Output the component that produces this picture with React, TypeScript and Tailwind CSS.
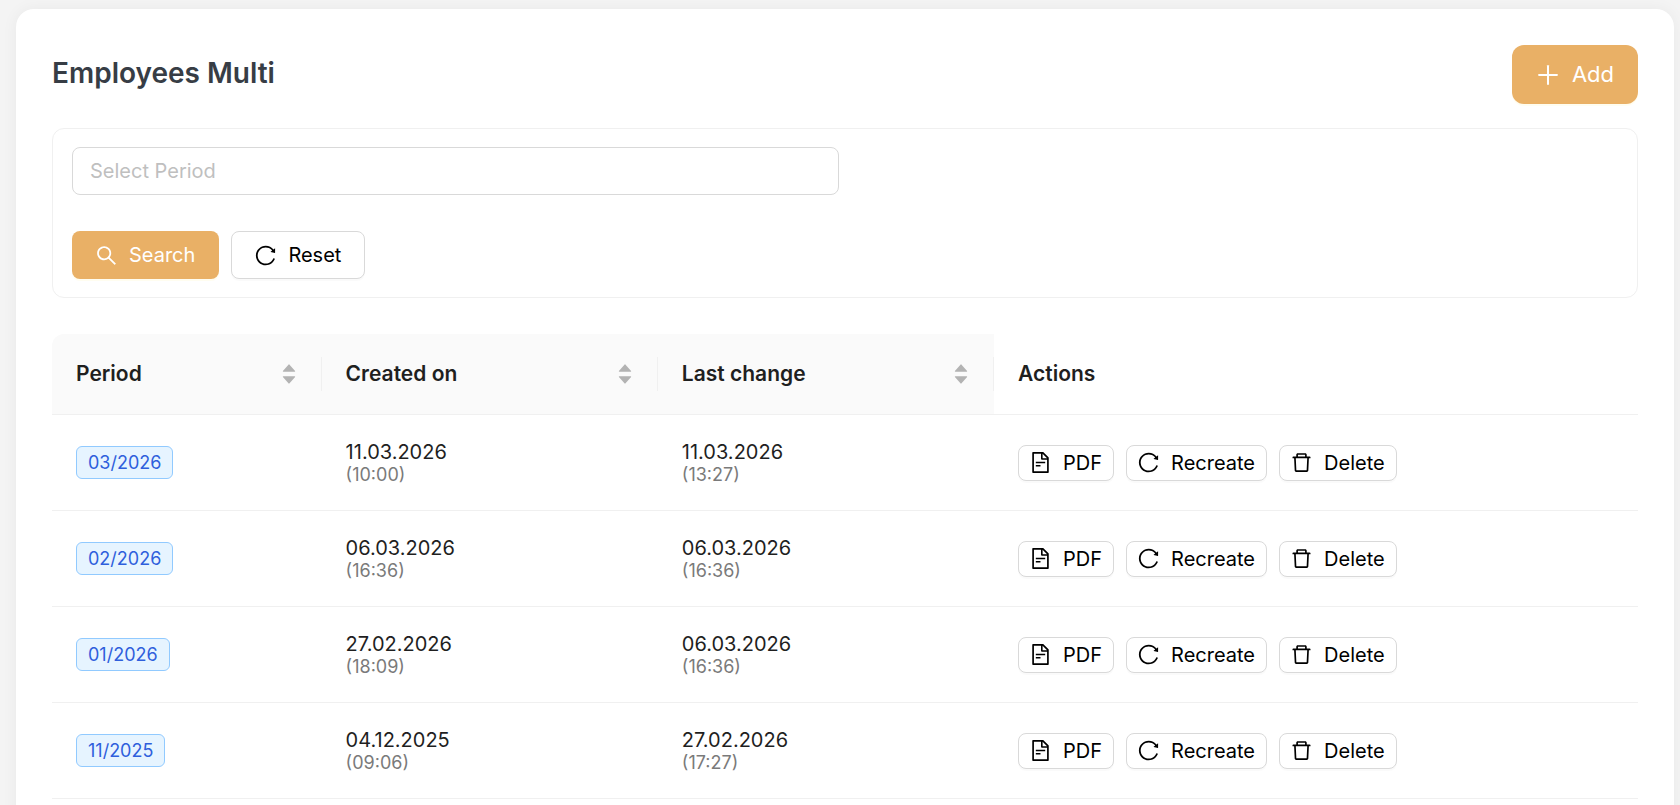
import type { ReactNode } from "react";
import {
  AiFillCaretDown,
  AiFillCaretUp,
  AiOutlineDelete,
  AiOutlineFileText,
  AiOutlinePlus,
  AiOutlineReload,
  AiOutlineSearch,
} from "react-icons/ai";

type Stamp = { date: string; time: string };
type Row = { period: string; created: Stamp; changed: Stamp };

const rows: Row[] = [
  { period: "03/2026", created: { date: "11.03.2026", time: "10:00" }, changed: { date: "11.03.2026", time: "13:27" } },
  { period: "02/2026", created: { date: "06.03.2026", time: "16:36" }, changed: { date: "06.03.2026", time: "16:36" } },
  { period: "01/2026", created: { date: "27.02.2026", time: "18:09" }, changed: { date: "06.03.2026", time: "16:36" } },
  { period: "11/2025", created: { date: "04.12.2025", time: "09:06" }, changed: { date: "27.02.2026", time: "17:27" } },
];

// Trims the empty margin that the outlined icons carry on every side.
const tight = "64 64 896 896";

function SortableHeader({ label, width }: { label: string; width: string }) {
  return (
    <th scope="col" className={`h-[81px] bg-[#fafafa] p-0 text-[21px] font-semibold first:rounded-tl-xl ${width}`}>
      <div className="flex h-[34px] items-center justify-between border-r border-[#f0f0f0] pr-[23px] pl-6">
        {label}
        <button type="button" aria-label={`Sort by ${label}`} className="flex flex-col items-center text-[#b3b3b3]">
          <AiFillCaretUp className="-mb-[3px] size-[18px]" />
          <AiFillCaretDown className="-mt-[3px] size-[18px]" />
        </button>
      </div>
    </th>
  );
}

function StampCell({ stamp }: { stamp: Stamp }) {
  return (
    <td className="px-6">
      <div className="text-xl leading-6">{stamp.date}</div>
      <div className="text-[18px] leading-[22px] text-[#7a7a7a]">({stamp.time})</div>
    </td>
  );
}

function ActionButton({ icon, children }: { icon: ReactNode; children: ReactNode }) {
  return (
    <button
      type="button"
      className="flex h-9 items-center gap-3 rounded-lg border border-[#d9d9d9] bg-white px-[11px] text-black shadow-[0_2px_0_rgba(0,0,0,0.02)]"
    >
      {icon}
      {children}
    </button>
  );
}

export default function App() {
  return (
    <div className="h-screen overflow-hidden bg-[#f4f4f4] pt-[9px] pr-1.5 pl-4 font-['Inter','Liberation_Sans',sans-serif] text-xl text-[#1f1f1f]">
      <main className="min-h-screen rounded-[18px] bg-white px-9 pt-9 pb-12 shadow-[0_0_16px_rgba(0,0,0,0.05)]">
        <header className="flex items-start justify-between">
          <h1 className="pt-2 text-[28px] leading-10 font-semibold text-[#373d45]">Employees Multi</h1>
          <button
            type="button"
            className="flex h-[59px] items-center gap-3 rounded-xl bg-[#e9b066] px-6 text-[22px] text-white shadow-[0_2px_0_rgba(255,215,5,0.06)]"
          >
            <AiOutlinePlus viewBox={tight} className="size-6" />
            Add
          </button>
        </header>

        <form className="mt-6 rounded-xl border border-[#f0f0f0] px-[19px] py-[18px]" onSubmit={(e) => e.preventDefault()}>
          <div className="grid grid-cols-2 gap-3">
            <input
              type="text"
              aria-label="Select Period"
              placeholder="Select Period"
              className="h-12 rounded-lg border border-[#d9d9d9] px-[17px] outline-none placeholder:text-[#bfbfbf]"
            />
          </div>
          <div className="mt-9 flex gap-3">
            <button
              type="submit"
              className="flex h-12 items-center gap-3 rounded-lg bg-[#e9b066] px-6 text-white shadow-[0_2px_0_rgba(255,215,5,0.06)]"
            >
              <AiOutlineSearch viewBox={tight} className="size-[21px]" />
              Search
            </button>
            <button
              type="reset"
              className="flex h-12 items-center gap-3 rounded-lg border border-[#d9d9d9] bg-white px-[23px] text-black shadow-[0_2px_0_rgba(0,0,0,0.02)]"
            >
              <AiOutlineReload viewBox={tight} className="size-[21px]" />
              Reset
            </button>
          </div>
        </form>

        <table className="mt-9 w-full table-fixed border-separate border-spacing-0 text-left">
          <thead className="[&_th]:border-b [&_th]:border-[#f0f0f0]">
            <tr>
              <SortableHeader label="Period" width="w-[17%]" />
              <SortableHeader label="Created on" width="w-[21.2%]" />
              <SortableHeader label="Last change" width="w-[21.2%]" />
              <th scope="col" className="px-6 text-[21px] font-semibold">
                Actions
              </th>
            </tr>
          </thead>
          <tbody className="[&_td]:h-24 [&_td]:border-b [&_td]:border-[#f0f0f0]">
            {rows.map((row) => (
              <tr key={row.period}>
                <td className="px-6">
                  <span className="inline-flex h-[33px] items-center rounded-md border border-[#91caff] bg-[#e6f4ff] px-[11px] align-middle text-[18px] text-[#2f5fdc]">
                    {row.period}
                  </span>
                </td>
                <StampCell stamp={row.created} />
                <StampCell stamp={row.changed} />
                <td className="px-6">
                  <div className="flex gap-3">
                    <ActionButton icon={<AiOutlineFileText viewBox={tight} className="size-[21px]" />}>PDF</ActionButton>
                    <ActionButton icon={<AiOutlineReload viewBox={tight} className="size-[21px]" />}>Recreate</ActionButton>
                    <ActionButton icon={<AiOutlineDelete viewBox={tight} className="size-[21px]" />}>Delete</ActionButton>
                  </div>
                </td>
              </tr>
            ))}
          </tbody>
        </table>
      </main>
    </div>
  );
}
